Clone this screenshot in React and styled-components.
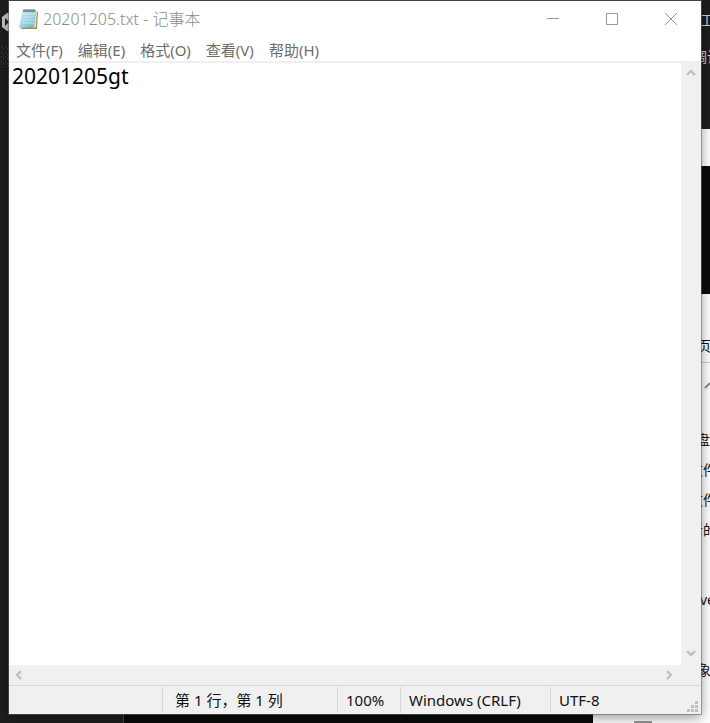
import React from "react";
import styled, { createGlobalStyle } from "styled-components";

const GlobalStyle = createGlobalStyle`
  * { box-sizing: border-box; }
  body {
    margin: 0;
    overflow: hidden;
    background: #1e1e1e;
    font-family: "Noto Sans", "Noto Sans CJK SC", sans-serif;
  }
  button, textarea { font: inherit; margin: 0; padding: 0; border: 0; }
`;

const Desktop = styled.div`
  display: grid;
  grid-template-columns: 9px minmax(0, 1fr) 9px;
  grid-template-rows: 1px minmax(0, 1fr) 9px;
  height: 100vh;
`;

/* Applications showing around the window */
const LeftEdge = styled.div`
  grid-area: 1 / 1 / 4 / 2;
  background: #1e1e1e;
`;

const RightEdge = styled.div`
  grid-area: 1 / 3 / 4 / 4;
  display: flex;
  flex-direction: column;
  overflow: hidden;
  background: #fff;
`;

const BottomEdge = styled.div`
  grid-area: 3 / 1 / 4 / 3;
  display: flex;
`;

const Pane = styled.div`
  flex: ${(p) => (p.$size ? `0 0 ${p.$size}px` : "1 1 0")};
  background: ${(p) => p.$color};
  min-width: 0;
`;

const Mark = styled.div`
  width: 18px;
  height: 2px;
  margin: 7px 0 0 41px;
  background: #999;
`;

const EdgeLine = styled.div`
  display: flex;
  align-items: center;
  flex: none;
  height: ${(p) => p.$height || 30}px;
  margin-top: ${(p) => p.$gap || 0}px;
  border-bottom: ${(p) => (p.$ruled ? "1px solid #ccc" : "0")};
  color: ${(p) => p.$color || "#111"};
  font-size: 14px;
  line-height: 20px;
  white-space: nowrap;
  text-indent: ${(p) => -(p.$hidden || 0)}px;
`;

/* Window */
const Window = styled.main`
  grid-area: 2 / 2 / 3 / 3;
  z-index: 1;
  display: flex;
  flex-direction: column;
  background: #fff;
  box-shadow: 0 0 0 1px rgba(100, 100, 100, 0.55), 0 3px 12px rgba(0, 0, 0, 0.45);
`;

const TitleBar = styled.header`
  display: flex;
  align-items: center;
  height: 37px;
  padding: 0 1px 2px 10px;
`;

const Title = styled.h1`
  flex: 1;
  margin: 0 0 0 4px;
  color: #8c8c8c;
  font-size: 16px;
  font-weight: 300;
  line-height: 20px;
`;

const CaptionButton = styled.button`
  display: grid;
  place-items: center;
  width: 59px;
  height: 100%;
  background: transparent;
  color: #999;
`;

const MenuBar = styled.nav`
  display: flex;
  gap: 15px;
  height: 25px;
  padding: 0 7px;
  border-bottom: 2px solid #f0f0f0;
`;

const MenuButton = styled.button`
  background: transparent;
  color: #6d6d6d;
  font-size: 15px;
  line-height: 22px;
`;

const Body = styled.div`
  flex: 1;
  display: grid;
  grid-template-columns: minmax(0, 1fr) 20px;
  grid-template-rows: minmax(0, 1fr) 20px;
  min-height: 0;
  background: #f0f0f0;
`;

const Editor = styled.textarea`
  width: 100%;
  height: 100%;
  padding: 0 3px;
  overflow: hidden;
  resize: none;
  outline: 0;
  background: #fff;
  color: #000;
  font-size: 21px;
  line-height: 27px;
`;

const ScrollBar = styled.div`
  display: flex;
  flex-direction: ${(p) => (p.$vertical ? "column" : "row")};
  justify-content: space-between;
  padding: ${(p) => (p.$vertical ? "0 0 2px" : "0 2px 0 0")};
`;

const ScrollButton = styled.button`
  display: grid;
  place-items: center;
  width: 20px;
  height: 20px;
  background: transparent;
  color: #bfbfbf;
`;

const StatusBar = styled.footer`
  display: flex;
  align-items: stretch;
  height: 29px;
  padding: 1px 0;
  border-top: 1px solid #d7d7d7;
  background: #f0f0f0;
`;

const StatusCell = styled.div`
  flex: ${(p) => (p.$width ? `0 0 ${p.$width}px` : "1 1 0")};
  padding-left: ${(p) => p.$inset || 8}px;
  border-left: ${(p) => (p.$first ? "0" : "1px solid #d7d7d7")};
  color: #111;
  font-size: 15px;
  line-height: 26px;
  white-space: nowrap;
`;

const Grip = styled.svg`
  align-self: flex-end;
  flex: none;
  margin-right: 2px;
`;

const NotepadIcon = () => (
  <svg width="20" height="22" viewBox="0 0 20 22" aria-hidden="true">
    <defs>
      <linearGradient id="page" x1="0" y1="0" x2="1" y2="1">
        <stop offset="0" stopColor="#d3edf3" />
        <stop offset=".5" stopColor="#9ed5e2" />
        <stop offset="1" stopColor="#5fb3c8" />
      </linearGradient>
    </defs>
    <path d="M17 3l2 1-1 17H3l-2-1z" fill="#9b8b66" />
    <path d="M16 3h2l-1 16-3 1z" fill="#e9ddba" />
    <path d="M4 2h13l-2 17-13 1-2-1z" fill="url(#page)" />
    <path d="M4 6h12M4 9h11M3 12h12M3 15h12" stroke="#c5e6ee" strokeWidth="1" />
    <path d="M4 3h13" stroke="#789ca5" strokeWidth="1" />
    <path d="M5 4V1M7 4V1M9 4V1M11 4V1M13 4V1M15 4V1" stroke="#566" strokeWidth="1" />
  </svg>
);

const chevrons = {
  up: "M1 7l4-4 4 4",
  down: "M1 3l4 4 4-4",
  left: "M7 1L3 5l4 4",
  right: "M3 1l4 4-4 4",
};

const Arrow = ({ direction, label }) => (
  <ScrollButton aria-label={label}>
    <svg width="10" height="10" viewBox="0 0 10 10" fill="none" stroke="currentColor" strokeWidth="2.4">
      <path d={chevrons[direction]} />
    </svg>
  </ScrollButton>
);

const captions = [
  ["最小化", "M0 5.5h12"],
  ["最大化", "M.5.5h11v11H.5z"],
  ["关闭", "M0 0l12 12M12 0L0 12"],
];

const menus = ["文件(F)", "编辑(E)", "格式(O)", "查看(V)", "帮助(H)"];

export default function App() {
  return (
    <>
      <GlobalStyle />
      <Desktop>
        <LeftEdge>
          <svg width="9" height="72" viewBox="0 0 9 72" aria-hidden="true">
            <path d="M9 13H7L2 17v10l5 4h2z" fill="#c8c8c8" />
            <path d="M5 18l4 4-4 4z" fill="#222" />
            <path
              d="M1 47h1M5 47h1M3 49h1M7 49h1M1 52h1M5 52h1M3 54h1M7 54h1M1 57h1M5 57h1M3 59h1M7 59h1M1 62h1M5 62h1M3 64h1M7 64h1M1 67h1M5 67h1"
              stroke="#555"
            />
          </svg>
        </LeftEdge>
        <RightEdge>
          <Pane $size={129} $color="#1e1e1e">
            <EdgeLine $height={40} $hidden={1} $color="#d4d4d4">工</EdgeLine>
            <EdgeLine $height={34} $hidden={8} $color="#d4d4d4">调试</EdgeLine>
          </Pane>
          <Pane $size={37} $color="#fff" />
          <Pane $size={128} $color="#0a0a0a" />
          <EdgeLine $gap={36} $height={33} $hidden={4} $ruled>页</EdgeLine>
          <EdgeLine $height={44}>
            <svg width="9" height="12" viewBox="0 0 9 12" fill="none" stroke="#888" strokeWidth="2" aria-hidden="true">
              <path d="M4 9l5-5" />
            </svg>
          </EdgeLine>
          <EdgeLine $gap={18} $hidden={5}>盘</EdgeLine>
          <EdgeLine $hidden={12}>文件</EdgeLine>
          <EdgeLine $hidden={12}>文件</EdgeLine>
          <EdgeLine $hidden={12}>新的</EdgeLine>
          <EdgeLine $gap={40} $hidden={1}>ver</EdgeLine>
          <EdgeLine $gap={40} $hidden={4}>象</EdgeLine>
        </RightEdge>
        <BottomEdge>
          <Pane $size={123} $color="#1e1e1e" />
          <Pane $size={1} $color="#444" />
          <Pane $color="#0a0a0a" />
          <Pane $size={108} $color="#fff">
            <Mark />
          </Pane>
        </BottomEdge>

        <Window>
          <TitleBar>
            <NotepadIcon />
            <Title>20201205.txt - 记事本</Title>
            {captions.map(([label, path]) => (
              <CaptionButton key={label} aria-label={label}>
                <svg width="12" height="12" viewBox="0 0 12 12" fill="none" stroke="currentColor">
                  <path d={path} />
                </svg>
              </CaptionButton>
            ))}
          </TitleBar>
          <MenuBar>
            {menus.map((menu) => (
              <MenuButton key={menu}>{menu}</MenuButton>
            ))}
          </MenuBar>
          <Body>
            <Editor aria-label="文本编辑器" defaultValue="20201205gt" spellCheck={false} />
            <ScrollBar $vertical>
              <Arrow direction="up" label="向上滚动" />
              <Arrow direction="down" label="向下滚动" />
            </ScrollBar>
            <ScrollBar>
              <Arrow direction="left" label="向左滚动" />
              <Arrow direction="right" label="向右滚动" />
            </ScrollBar>
          </Body>
          <StatusBar>
            <StatusCell $first />
            <StatusCell $width={175} $inset={12}>第 1 行，第 1 列</StatusCell>
            <StatusCell $width={63}>100%</StatusCell>
            <StatusCell $width={150}>Windows (CRLF)</StatusCell>
            <StatusCell $width={137}>UTF-8</StatusCell>
            <Grip width="12" height="12" viewBox="0 0 12 12" fill="#bfbfbf" aria-hidden="true">
              <path d="M8 0h3v3H8zM4 4h3v3H4zM8 4h3v3H8zM0 8h3v3H0zM4 8h3v3H4zM8 8h3v3H8z" />
            </Grip>
          </StatusBar>
        </Window>
      </Desktop>
    </>
  );
}
